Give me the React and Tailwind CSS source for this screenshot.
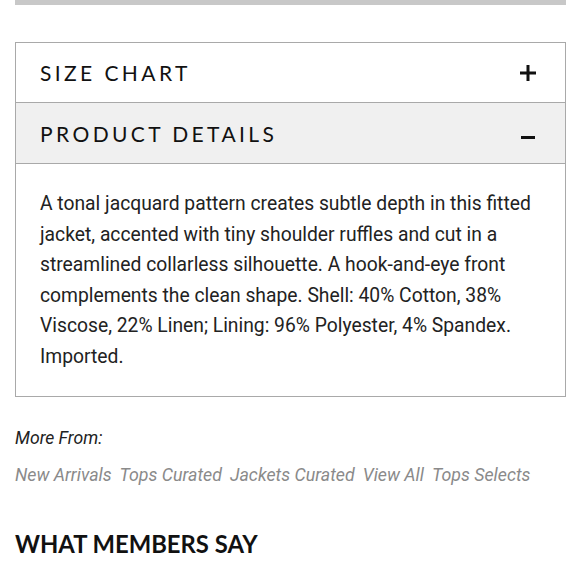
import React from "react";

export default function App() {
  return (
    <div className="w-[580px] h-[580px] bg-white overflow-hidden font-['Roboto',sans-serif] text-[#222]">
      <div className="mx-[15px] w-[551px] h-[5px] bg-[#c8c8c8]" />
      <div className="mx-[15px] w-[551px] mt-[37px] border border-[#a9a9a9]">
        <div className="h-[60px] flex items-center justify-between pl-[24px] pr-[29px] border-b border-[#a9a9a9]">
          <span className="font-['Lato',sans-serif] text-[21px] tracking-[3.4px] text-[#111] leading-none">SIZE CHART</span>
          <svg width="16" height="16" viewBox="0 0 16 16" className="mt-[1px]">
            <rect x="6.5" y="0" width="3" height="16" fill="#111" />
            <rect x="0" y="6.5" width="16" height="3" fill="#111" />
          </svg>
        </div>
        <div className="h-[61px] flex items-center justify-between pl-[24px] pr-[30px] bg-[#f0f0f0] border-b border-[#a9a9a9]">
          <span className="font-['Lato',sans-serif] text-[21px] tracking-[3.4px] text-[#111] leading-none">PRODUCT DETAILS</span>
          <svg width="14" height="3" viewBox="0 0 14 3" className="mt-[8px]">
            <rect x="0" y="0" width="14" height="3" fill="#111" />
          </svg>
        </div>
        <div className="pl-[24px] pr-[14px] pt-[25px] pb-[24px]">
          <p className="text-[19.3px] leading-[30.5px] text-[#222]">
            A tonal jacquard pattern creates subtle depth in this fitted jacket, accented with tiny shoulder ruffles and cut in a streamlined collarless silhouette. A hook-and-eye front complements the clean shape. Shell: 40% Cotton, 38% Viscose, 22% Linen; Lining: 96% Polyester, 4% Spandex. Imported.
          </p>
        </div>
      </div>
      <div className="px-[15px] mt-[29px]">
        <p className="italic text-[17.6px] leading-[24px] text-[#222]">More From:</p>
        <div className="flex gap-[8px] mt-[13px] italic text-[17.8px] leading-[24px] text-[#8a8a8a]">
          <span>New Arrivals</span>
          <span>Tops Curated</span>
          <span>Jackets Curated</span>
          <span>View All</span>
          <span>Tops Selects</span>
        </div>
        <h2 className="mt-[46px] font-['Lato',sans-serif] font-bold text-[23.8px] tracking-[0px] leading-none text-[#111]">WHAT MEMBERS SAY</h2>
      </div>
    </div>
  );
}
